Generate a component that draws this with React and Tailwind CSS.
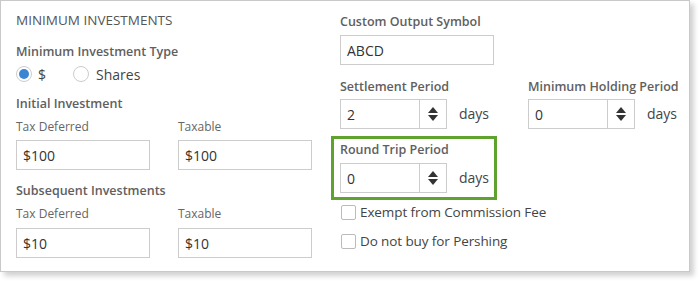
import React from "react";

function Spinner({ value }) {
  return (
    <div className="flex h-[30px] w-[107px] border border-[#cccccc] bg-white">
      <div className="flex flex-1 items-center pl-[6px] text-[14px] text-[#333]">{value}</div>
      <div className="flex w-[27px] flex-col items-center justify-center border-l border-[#cccccc]">
        <svg width="10" height="14" viewBox="0 0 10 14">
          <path d="M5 0 L10 6 L0 6 Z" fill="#333" />
          <path d="M0 8 L10 8 L5 14 Z" fill="#333" />
        </svg>
      </div>
    </div>
  );
}

function TextBox({ value, width = "w-[134px]" }) {
  return (
    <div className={`flex h-[30px] ${width} items-center border border-[#cccccc] bg-white pl-[6px] text-[14px] text-[#333]`}>
      {value}
    </div>
  );
}

function Checkbox({ label }) {
  return (
    <div className="flex h-[18px] items-center">
      <div className="h-[15px] w-[15px] rounded-[2px] border border-[#bbbbbb] bg-white" />
      <span className="ml-[4px] text-[13.5px] tracking-[-0.1px] text-[#444]">{label}</span>
    </div>
  );
}

const labelCls = "h-[18px] text-[12.5px] font-semibold leading-[18px] text-[#606060]";

export default function App() {
  return (
    <div
      className="h-[281px] w-[699px] bg-white"
      style={{ fontFamily: '"Open Sans", "Noto Sans", sans-serif' }}
    >
      <div className="flex h-[272px] w-[690px] border border-[#c9c9c9] bg-white shadow-[4px_4px_5px_rgba(0,0,0,0.18)]">
        {/* Left column */}
        <div className="w-[314px] pl-[15px] pt-[9px]">
          <div className="h-[20px] text-[13.5px] leading-[20px] text-[#555]">MINIMUM INVESTMENTS</div>
          <div className={`mt-[13px] ${labelCls}`}>Minimum Investment Type</div>
          <div className="mt-[4px] flex h-[18px] items-center text-[14px] text-[#444]">
            <div className="flex h-[16px] w-[16px] items-center justify-center rounded-full border border-[#cccccc]">
              <div className="h-[10px] w-[10px] rounded-full bg-[#3a86d2]" />
            </div>
            <span className="ml-[6px]">$</span>
            <div className="ml-[27px] h-[16px] w-[16px] rounded-full border border-[#cccccc]" />
            <span className="ml-[7px]">Shares</span>
          </div>
          <div className={`mt-[12px] ${labelCls}`}>Initial Investment</div>
          <div className="mt-[6px] flex h-[16px] text-[12px] leading-[16px] text-[#666]">
            <span className="w-[162px]">Tax Deferred</span>
            <span>Taxable</span>
          </div>
          <div className="mt-[5px] flex gap-[28px]">
            <TextBox value="$100" />
            <TextBox value="$100" />
          </div>
          <div className={`mt-[12px] ${labelCls}`}>Subsequent Investments</div>
          <div className="mt-[6px] flex h-[16px] text-[12px] leading-[16px] text-[#666]">
            <span className="w-[162px]">Tax Deferred</span>
            <span>Taxable</span>
          </div>
          <div className="mt-[6px] flex gap-[28px]">
            <TextBox value="$10" />
            <TextBox value="$10" />
          </div>
        </div>

        {/* Right column */}
        <div className="flex-1 pt-[12px] pl-[16px]">
          <div className="pl-[9px]">
            <div className={labelCls}>Custom Output Symbol</div>
            <div className="mt-[4px]">
              <TextBox value="ABCD" width="w-[154px]" />
            </div>
            <div className="mt-[13px] flex">
              <div className="w-[188px]">
                <div className={labelCls}>Settlement Period</div>
                <div className="mt-[3px] flex items-center">
                  <Spinner value="2" />
                  <span className="ml-[12px] pb-[2px] text-[14px] text-[#444]">days</span>
                </div>
              </div>
              <div>
                <div className={labelCls}>Minimum Holding Period</div>
                <div className="mt-[3px] flex items-center">
                  <Spinner value="0" />
                  <span className="ml-[12px] pb-[2px] text-[14px] text-[#444]">days</span>
                </div>
              </div>
            </div>
          </div>
          <div className="mt-[7px] w-[166px] border-[3px] border-[#5fa22d] pb-[4px] pl-[6px] pt-[2px]">
            <div className={labelCls}>Round Trip Period</div>
            <div className="mt-[4px] flex items-center">
              <Spinner value="0" />
              <span className="ml-[12px] pb-[2px] text-[14px] text-[#444]">days</span>
            </div>
          </div>
          <div className="mt-[3px] pl-[10px]">
            <Checkbox label="Exempt from Commission Fee" />
            <div className="mt-[11px]">
              <Checkbox label="Do not buy for Pershing" />
            </div>
          </div>
        </div>
      </div>
    </div>
  );
}
